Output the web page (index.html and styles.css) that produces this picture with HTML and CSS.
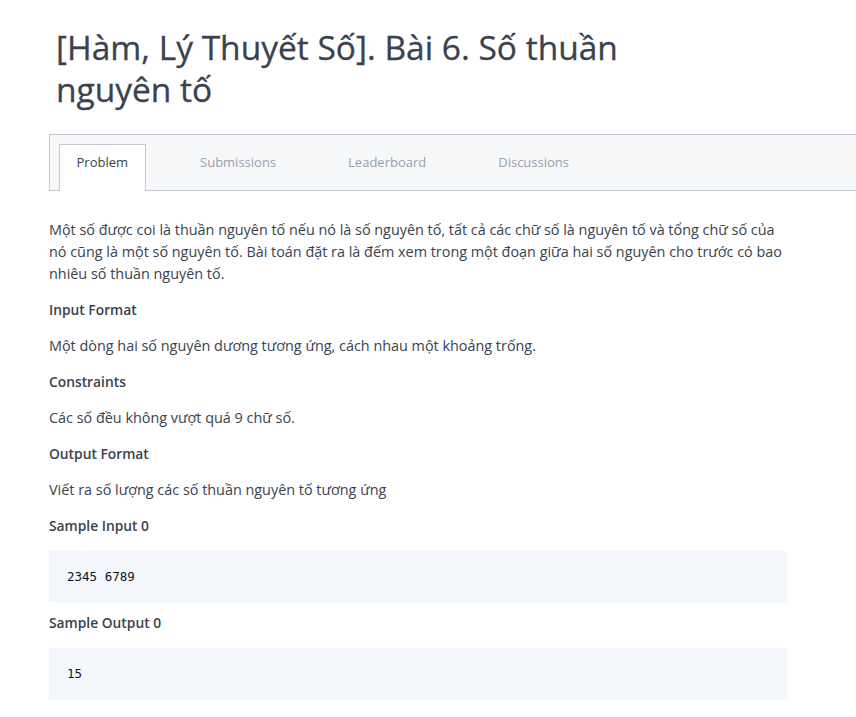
FILE: index.html
```html
<!DOCTYPE html>
<html lang="vi">
<head>
<meta charset="utf-8">
<title>Bài 6. Số thuần nguyên tố</title>
<link rel="stylesheet" href="styles.css">
</head>
<body>
<div class="page">
  <h1 class="title">[Hàm, Lý Thuyết Số]. Bài 6. Số thuần nguyên tố</h1>
  <div class="tabbar">
    <div class="tab active">Problem</div>
    <div class="tab">Submissions</div>
    <div class="tab">Leaderboard</div>
    <div class="tab">Discussions</div>
  </div>
  <div class="content">
    <p>Một số được coi là thuần nguyên tố nếu nó là số nguyên tố, tất cả các chữ số là nguyên tố và tổng chữ số của nó cũng là một số nguyên tố. Bài toán đặt ra là đếm xem trong một đoạn giữa hai số nguyên cho trước có bao nhiêu số thuần nguyên tố.</p>
    <h3>Input Format</h3>
    <p>Một dòng hai số nguyên dương tương ứng, cách nhau một khoảng trống.</p>
    <h3>Constraints</h3>
    <p>Các số đều không vượt quá 9 chữ số.</p>
    <h3>Output Format</h3>
    <p>Viết ra số lượng các số thuần nguyên tố tương ứng</p>
    <h3>Sample Input 0</h3>
    <pre class="code">2345 6789</pre>
    <h3 class="after-code">Sample Output 0</h3>
    <pre class="code">15</pre>
  </div>
</div>
</body>
</html>
```
FILE: styles.css
```css
html, body {
  margin: 0;
  padding: 0;
  background: #ffffff;
}
body {
  font-family: "Open Sans", "Liberation Sans", sans-serif;
  color: #39424e;
}
.page {
  padding: 0 0 0 49px;
  overflow: hidden;
}
.title {
  margin: 0;
  padding: 26px 0 0 7px;
  width: 620px;
  font-size: 33.5px;
  font-weight: 400;
  line-height: 42px;
  color: #39424e;
  -webkit-text-stroke: 0.3px #39424e;
}
.tabbar {
  margin-top: 24px;
  display: flex;
  gap: 37px;
  padding: 9px 0 0 9px;
  height: 46px;
  background: #f7f8fa;
  border: 1px solid #c2c7d0;
  border-right: none;
}
.tab {
  padding: 0 16.5px;
  font-size: 13px;
  line-height: 34px;
  color: #979faf;
  border: 1px solid transparent;
  border-bottom: none;
  height: 46px;
  box-sizing: border-box;
}
.tab.active {
  background: #ffffff;
  color: #39424e;
  border-color: #c2c7d0;
  height: 47px;
}
.content {
  width: 738px;
  padding-top: 28px;
  font-size: 14.4px;
  line-height: 22px;
}
.content p {
  margin: 0 0 14px;
}
.content h3 {
  margin: 0 0 14px;
  font-size: 13.8px;
  font-weight: 600;
  line-height: 22px;
}
.code {
  margin: 0 0 9px;
  padding: 15px 18px;
  background: #f4f8fd;
  font-family: "DejaVu Sans Mono", "Liberation Mono", monospace;
  font-size: 12.5px;
  line-height: 22px;
  color: #0e141e;
}
```
